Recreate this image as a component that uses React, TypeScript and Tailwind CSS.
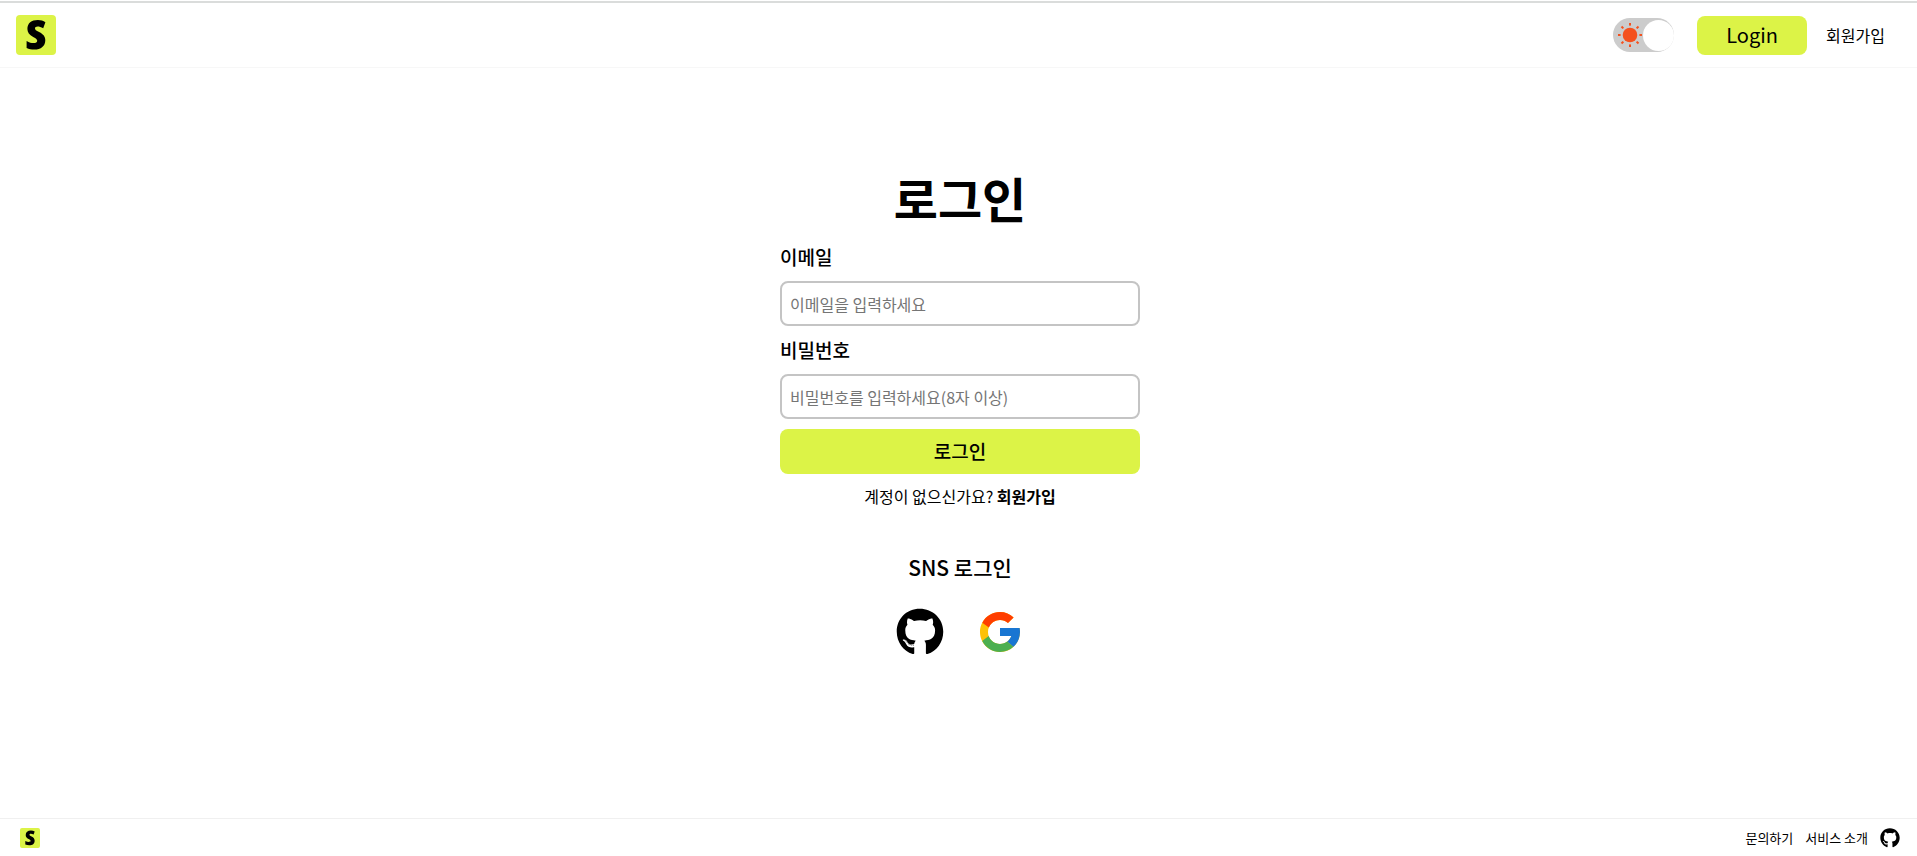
import { FaGithub } from "react-icons/fa";
import { FcGoogle } from "react-icons/fc";

const rays = [0, 45, 90, 135, 180, 225, 270, 315];

function Logo({ className }: { className: string }) {
  return (
    <svg viewBox="0 0 40 40" className={className} role="img" aria-label="S">
      <rect width="40" height="40" rx="4" fill="#dcf347" />
      <path
        d="M29.4 7.2 27.200 13.200C25 12.100 23.200 11.600 21.700 11.600c-1.700 0-2.700.7-2.700 1.900 0 1.200 1 2 4.100 3.600 4.300 2.200 6.200 4.700 6.200 8.200 0 5.900-4.300 9.300-11 9.300-2.900 0-5.400-.5-7.700-1.600V25.900c2.600 1.500 4.900 2.200 6.900 2.200 2.400 0 3.700-.8 3.700-2.400 0-1.300-1-2.200-4-3.800-4-2.100-5.800-4.500-5.800-7.900 0-5.600 4-8.900 10.500-8.900 2.900 0 5.500.7 7.500 2.100Z"
        fill="#000"
      />
    </svg>
  );
}

function ThemeToggle() {
  return (
    <label className="relative flex h-[34px] w-[61px] cursor-pointer items-center justify-between rounded-full bg-[#ccc] pl-[5px]">
      <input type="checkbox" aria-label="테마 변경" className="absolute inset-0 cursor-pointer opacity-0" />
      <svg viewBox="0 0 24 24" className="size-6" fill="#f4511e" aria-hidden="true">
        <circle cx="12" cy="12" r="7.300" />
        {rays.map((angle) => (
          <rect key={angle} x="11" y="0" width="2" height="2.600" transform={`rotate(${angle} 12 12)`} />
        ))}
      </svg>
      <span className="size-[31px] rounded-full bg-white" />
    </label>
  );
}

function Field({ id, label, type, placeholder }: { id: string; label: string; type: string; placeholder: string }) {
  return (
    <div className="mb-2.5 flex flex-col">
      <label htmlFor={id} className="mb-2.5 text-[19px] leading-7 font-medium">
        {label}
      </label>
      <input
        id={id}
        type={type}
        placeholder={placeholder}
        className="h-[45px] w-full rounded-lg border-2 border-[#c4c4c4] px-2 text-base outline-none placeholder:text-[#757575]"
      />
    </div>
  );
}

export default function App() {
  return (
    <div className="flex min-h-screen flex-col bg-white font-['Noto_Sans_CJK_KR','Noto_Sans',sans-serif] text-black">
      <div className="mt-px h-0.5 bg-[#dadcdb]" />
      <header className="flex h-[65px] items-center justify-between border-b border-[#f7f7f7] pr-8 pl-4">
        <a href="/">
          <Logo className="size-10" />
        </a>
        <nav className="flex items-center">
          <ThemeToggle />
          <button type="button" className="ml-[23px] h-[39px] w-[110px] rounded-lg bg-[#dcf347] text-xl">
            Login
          </button>
          <a href="/signup" className="ml-[19px] text-base">
            회원가입
          </a>
        </nav>
      </header>

      <main className="flex flex-1 flex-col items-center pt-[93px] pl-[3px]">
        <h1 className="text-5xl leading-[72px] font-bold">로그인</h1>
        <form className="mt-2.5 flex w-[360px] flex-col">
          <Field id="email" label="이메일" type="email" placeholder="이메일을 입력하세요" />
          <Field id="password" label="비밀번호" type="password" placeholder="비밀번호를 입력하세요(8자 이상)" />
          <button type="button" className="h-[45px] rounded-lg bg-[#dcf347] text-[19px] font-medium">
            로그인
          </button>
        </form>
        <p className="mt-2.5 text-base">
          계정이 없으신가요?{" "}
          <a href="/signup" className="font-bold">
            회원가입
          </a>
        </p>
        <h2 className="mt-[45px] text-[21px] leading-7 font-medium">SNS 로그인</h2>
        <div className="mt-[27px] flex items-center gap-8">
          <button type="button" aria-label="GitHub">
            <FaGithub className="size-12" />
          </button>
          <button type="button" aria-label="Google">
            <FcGoogle className="size-12" />
          </button>
        </div>
      </main>

      <footer className="flex h-[38px] items-center justify-between border-t border-[#f0f0f0] pr-[17px] pl-5">
        <a href="/">
          <Logo className="size-5" />
        </a>
        <div className="flex items-center gap-3 text-[13px]">
          <a href="/contact">문의하기</a>
          <a href="/about">서비스 소개</a>
          <a href="https://github.com" aria-label="GitHub">
            <FaGithub className="size-5" />
          </a>
        </div>
      </footer>
    </div>
  );
}
